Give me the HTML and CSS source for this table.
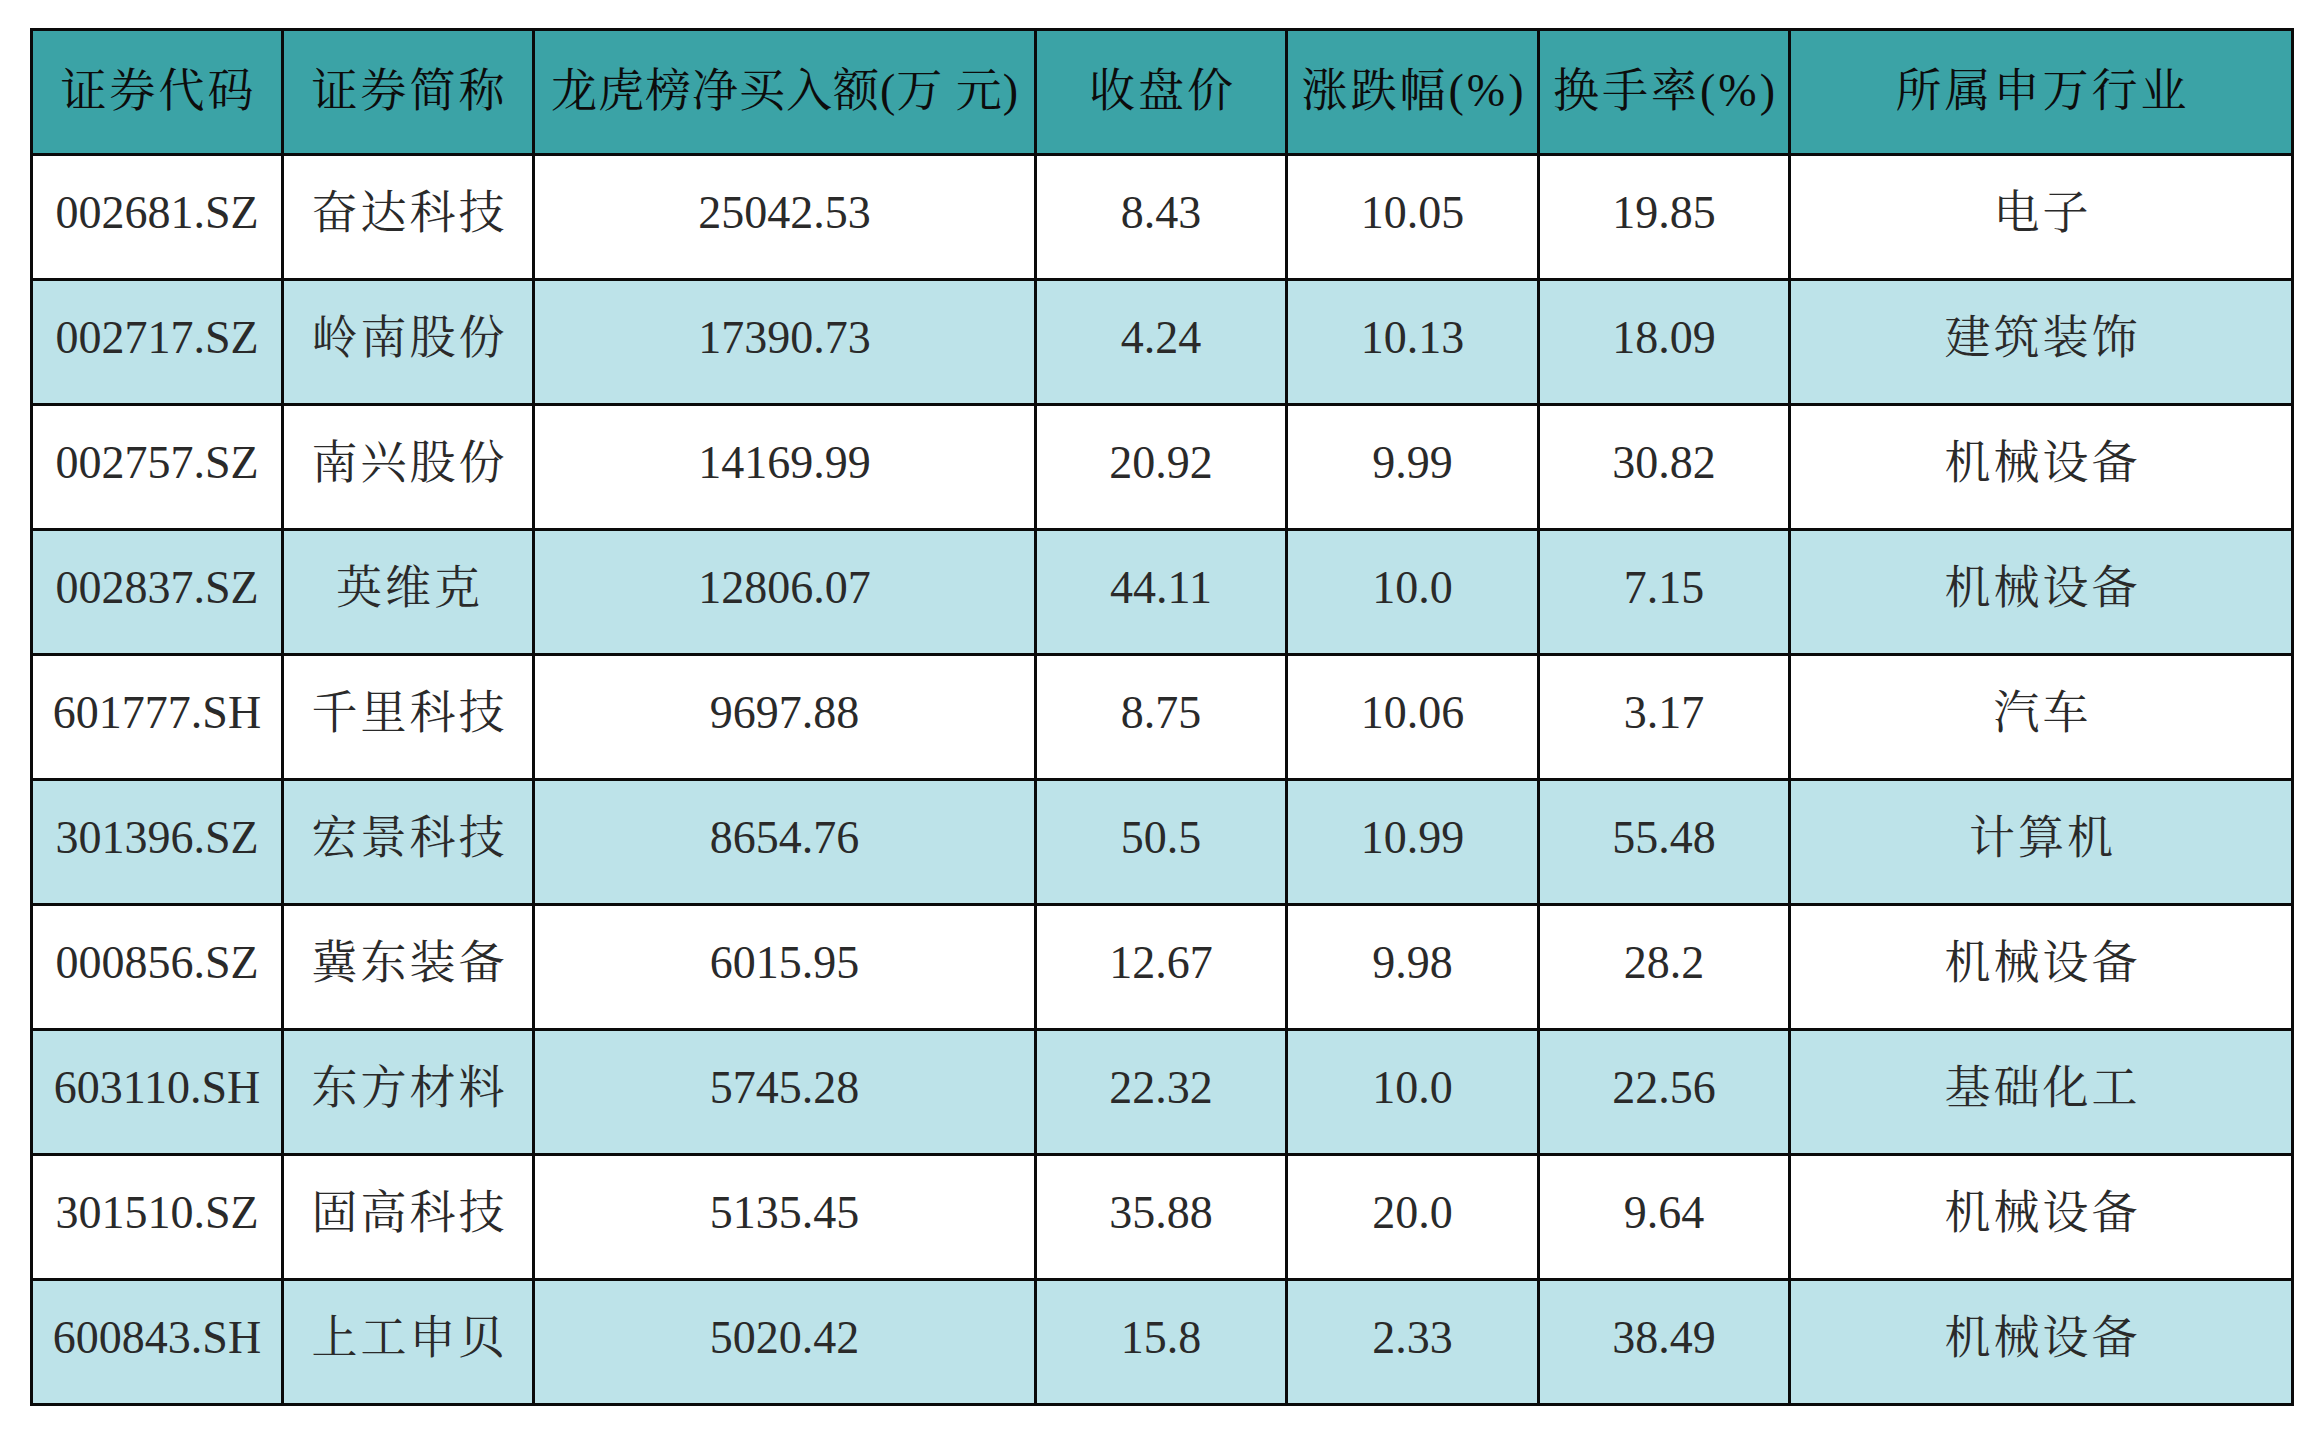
FILE: index.html
```html
<!DOCTYPE html>
<html lang="zh-CN">
<head>
<meta charset="utf-8">
<title>龙虎榜</title>
<link rel="stylesheet" href="styles.css">
</head>
<body>
<table class="lhb">
  <colgroup>
    <col class="c1"><col class="c2"><col class="c3"><col class="c4"><col class="c5"><col class="c6"><col class="c7">
  </colgroup>
  <thead>
    <tr class="head">
      <th>证券代码</th><th>证券简称</th><th class="long">龙虎榜净买入额(万 元)</th><th>收盘价</th><th>涨跌幅(%)</th><th>换手率(%)</th><th>所属申万行业</th>
    </tr>
  </thead>
  <tbody>
    <tr class="odd"><td>002681.SZ</td><td class="cn">奋达科技</td><td>25042.53</td><td>8.43</td><td>10.05</td><td>19.85</td><td class="cn">电子</td></tr>
    <tr class="even"><td>002717.SZ</td><td class="cn">岭南股份</td><td>17390.73</td><td>4.24</td><td>10.13</td><td>18.09</td><td class="cn">建筑装饰</td></tr>
    <tr class="odd"><td>002757.SZ</td><td class="cn">南兴股份</td><td>14169.99</td><td>20.92</td><td>9.99</td><td>30.82</td><td class="cn">机械设备</td></tr>
    <tr class="even"><td>002837.SZ</td><td class="cn">英维克</td><td>12806.07</td><td>44.11</td><td>10.0</td><td>7.15</td><td class="cn">机械设备</td></tr>
    <tr class="odd"><td>601777.SH</td><td class="cn">千里科技</td><td>9697.88</td><td>8.75</td><td>10.06</td><td>3.17</td><td class="cn">汽车</td></tr>
    <tr class="even"><td>301396.SZ</td><td class="cn">宏景科技</td><td>8654.76</td><td>50.5</td><td>10.99</td><td>55.48</td><td class="cn">计算机</td></tr>
    <tr class="odd"><td>000856.SZ</td><td class="cn">冀东装备</td><td>6015.95</td><td>12.67</td><td>9.98</td><td>28.2</td><td class="cn">机械设备</td></tr>
    <tr class="even"><td>603110.SH</td><td class="cn">东方材料</td><td>5745.28</td><td>22.32</td><td>10.0</td><td>22.56</td><td class="cn">基础化工</td></tr>
    <tr class="odd"><td>301510.SZ</td><td class="cn">固高科技</td><td>5135.45</td><td>35.88</td><td>20.0</td><td>9.64</td><td class="cn">机械设备</td></tr>
    <tr class="even"><td>600843.SH</td><td class="cn">上工申贝</td><td>5020.42</td><td>15.8</td><td>2.33</td><td>38.49</td><td class="cn">机械设备</td></tr>
  </tbody>
</table>
</body>
</html>
```

FILE: styles.css
```css
html, body {
  margin: 0;
  padding: 0;
  background: #ffffff;
}

.lhb {
  margin: 28px 0 0 30px;
  border-collapse: collapse;
  table-layout: fixed;
  width: 2261px;
  font-family: "Liberation Serif", "Noto Serif CJK SC", "Noto Sans CJK SC", serif;
  font-size: 46px;
  color: #2a2a2a;
}

.c1, .c2, .c4, .c6 { width: 251px; }
.c5 { width: 252px; }
.c3 { width: 502px; }
.c7 { width: 503px; }

.lhb th,
.lhb td {
  border: 3px solid #0a0a0a;
  padding: 0;
  text-align: center;
  vertical-align: middle;
  white-space: nowrap;
  font-weight: 400;
  line-height: 1.1;
}

.lhb th {
  height: 120px;
  background: #3ba3a6;
  color: #0c0c0c;
  letter-spacing: 3px;
  padding: 0 0 2px 3px;
}

.lhb th.long {
  letter-spacing: 1px;
  padding-left: 1px;
}

.lhb td {
  height: 114px;
  padding-bottom: 8px;
}

.lhb td.cn {
  letter-spacing: 3px;
  padding-left: 3px;
}

.odd td { background: #ffffff; }
.even td { background: #bde3e9; }
```
